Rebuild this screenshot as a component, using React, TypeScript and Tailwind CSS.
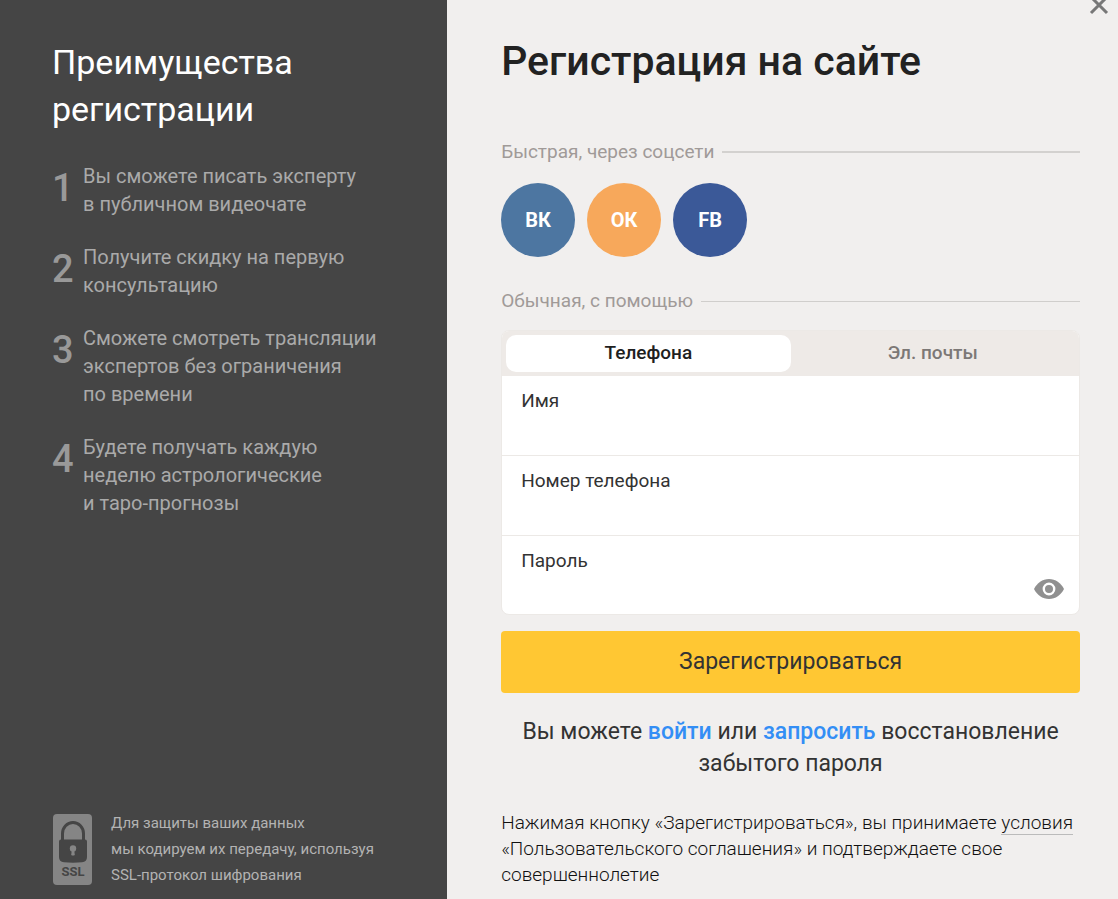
import { useState, type ReactNode } from "react";

const benefits: string[][] = [
  ["Вы сможете писать эксперту", "в публичном видеочате"],
  ["Получите скидку на первую", "консультацию"],
  ["Сможете смотреть трансляции", "экспертов без ограничения", "по времени"],
  ["Будете получать каждую", "неделю астрологические", "и таро-прогнозы"],
];

const networks = [
  { label: "ВК", name: "ВКонтакте", color: "bg-[#4d76a1]" },
  { label: "ОК", name: "Одноклассники", color: "bg-[#f7a85b]" },
  { label: "FB", name: "Facebook", color: "bg-[#3b5998]" },
];

function SslBadge() {
  return (
    <svg width="40" height="71" viewBox="0 0 40 71" className="shrink-0" aria-hidden="true">
      <rect width="39" height="71" rx="4" fill="#858585" />
      <path d="M9.500 27V19.500a10.500 11 0 0 1 21 0V27" fill="none" stroke="#454545" strokeWidth="3" />
      <path d="M6 27.500q0-2 2-2h24q2 0 2 2V43q0 5-5 5.300q-9 .9-18 0q-5-.3-5-5.300z" fill="#454545" />
      <circle cx="20" cy="34.500" r="3.200" fill="#858585" />
      <path d="M18.800 36h2.400l.6 5q-1.800 1-3.600 0z" fill="#858585" />
      <text x="20" y="62" textAnchor="middle" fontFamily="Roboto, sans-serif" fontWeight="700" fontSize="13" fill="#454545">
        SSL
      </text>
    </svg>
  );
}

function SectionLabel({ children, thick }: { children: ReactNode; thick?: boolean }) {
  return (
    <div className="flex items-center gap-2 text-[19px] leading-6 text-[#a09a98]">
      <h2>{children}</h2>
      <div className={thick ? "h-0.5 flex-1 bg-[#d3d1cf]" : "h-px flex-1 bg-[#d0cecc]"} />
    </div>
  );
}

function Field({ id, label, type, children }: { id: string; label: string; type: string; children?: ReactNode }) {
  return (
    <div className="relative h-20 border-b border-[#ece9e6] px-[19px] pt-[13px] last:h-[78px] last:border-b-0">
      <label htmlFor={id} className="block text-[19px] leading-6 text-[#333333]">
        {label}
      </label>
      <input id={id} name={id} type={type} className="h-9 w-full bg-transparent pr-12 text-[19px] outline-none" />
      {children}
    </div>
  );
}

export default function App() {
  const [tab, setTab] = useState<"phone" | "email">("phone");
  const [visible, setVisible] = useState(false);

  const tabClass = (active: boolean) =>
    active
      ? "flex-1 rounded-[10px] bg-white text-[19px] font-medium text-[#1f1f1f]"
      : "flex-1 rounded-[10px] text-[19px] font-medium text-[#7c7876]";

  return (
    <div className="relative flex min-h-screen overflow-hidden bg-[#f1efee] font-[Roboto,sans-serif] text-[#2a2a2a]">
      <aside className="flex w-2/5 flex-col justify-between bg-[#454545] px-[52px] pt-[39px] pb-3">
        <div>
          <h2 className="text-[34px] leading-[47px] text-white">
            Преимущества
            <br />
            регистрации
          </h2>
          <ol className="mt-[29px] flex flex-col gap-[25px]">
            {benefits.map((lines, i) => (
              <li key={lines[0]} className="flex text-xl leading-7 text-[#aaaaaa]">
                <span className="w-[31px] shrink-0 pt-1.5 text-[38px] leading-10 font-medium text-[#999999]">{i + 1}</span>
                <p>
                  {lines.map((line) => (
                    <span key={line} className="block whitespace-nowrap">
                      {line}
                    </span>
                  ))}
                </p>
              </li>
            ))}
          </ol>
        </div>
        <div className="flex items-center gap-[18px] pl-px">
          <SslBadge />
          <p className="text-[15px] leading-[26px] whitespace-nowrap text-[#b3b3b3]">
            Для защиты ваших данных
            <br />
            мы кодируем их передачу, используя
            <br />
            SSL-протокол шифрования
          </p>
        </div>
      </aside>

      <main className="min-w-0 flex-1 pt-[35px] pr-[38px] pb-3 pl-[54px]">
        <button type="button" aria-label="Закрыть" className="absolute -top-1.5 right-2 text-[#777777]">
          <svg width="22" height="22" viewBox="0 0 22 22" className="block" aria-hidden="true">
            <path d="M3 3L19 19M19 3L3 19" stroke="currentColor" strokeWidth="3" />
          </svg>
        </button>

        <h1 className="text-[41px] leading-[52px] font-medium text-[#222222]">Регистрация на сайте</h1>

        <div className="mt-[53px]">
          <SectionLabel thick>Быстрая, через соцсети</SectionLabel>
        </div>
        <div className="mt-[19px] flex gap-3">
          {networks.map((n) => (
            <button
              key={n.label}
              type="button"
              title={n.name}
              className={`size-[74px] rounded-full text-xl font-bold text-white ${n.color}`}
            >
              {n.label}
            </button>
          ))}
        </div>

        <div className="mt-8">
          <SectionLabel>Обычная, с помощью</SectionLabel>
        </div>
        <form onSubmit={(e) => e.preventDefault()}>
          <div className="mt-[17px] overflow-hidden rounded-lg border border-[#ece9e6] bg-white">
            <div className="flex h-[45px] bg-[#eeeae7] p-1">
              <button type="button" aria-pressed={tab === "phone"} onClick={() => setTab("phone")} className={tabClass(tab === "phone")}>
                Телефона
              </button>
              <button type="button" aria-pressed={tab === "email"} onClick={() => setTab("email")} className={tabClass(tab === "email")}>
                Эл. почты
              </button>
            </div>
            <Field id="name" label="Имя" type="text" />
            {tab === "phone" ? (
              <Field id="phone" label="Номер телефона" type="tel" />
            ) : (
              <Field id="email" label="Эл. почта" type="email" />
            )}
            <Field id="password" label="Пароль" type={visible ? "text" : "password"}>
              <button
                type="button"
                aria-label="Показать пароль"
                onClick={() => setVisible(!visible)}
                className="absolute right-[15px] bottom-[15px] text-[#909090]"
              >
                <svg width="30" height="20" viewBox="0 0 30 20" className="block" aria-hidden="true">
                  <path d="M0 10C3 4 8.500 0 15 0s12 4 15 10c-3 6-8.500 10-15 10S3 16 0 10z" fill="currentColor" />
                  <circle cx="15" cy="10" r="5.200" fill="currentColor" stroke="#fff" strokeWidth="2.400" />
                </svg>
              </button>
            </Field>
          </div>
          <button type="submit" className="mt-4 h-[62px] w-full rounded bg-[#ffc733] text-[23px] text-[#333333]">
            Зарегистрироваться
          </button>
        </form>

        <p className="mt-[23px] text-center text-[23px] leading-8 text-[#333333]">
          Вы можете{" "}
          <a href="#login" className="font-medium text-[#338ef5]">
            войти
          </a>{" "}
          или{" "}
          <a href="#restore" className="font-medium text-[#338ef5]">
            запросить
          </a>{" "}
          восстановление забытого пароля
        </p>
        <p className="mt-[30px] text-[19px] leading-[26px] font-light text-[#111111]">
          Нажимая кнопку «Зарегистрироваться», вы принимаете{" "}
          <a href="#terms" className="border-b border-[#bbbbbb]">
            условия
          </a>{" "}
          «Пользовательского соглашения» и подтверждаете свое совершеннолетие
        </p>
      </main>
    </div>
  );
}
